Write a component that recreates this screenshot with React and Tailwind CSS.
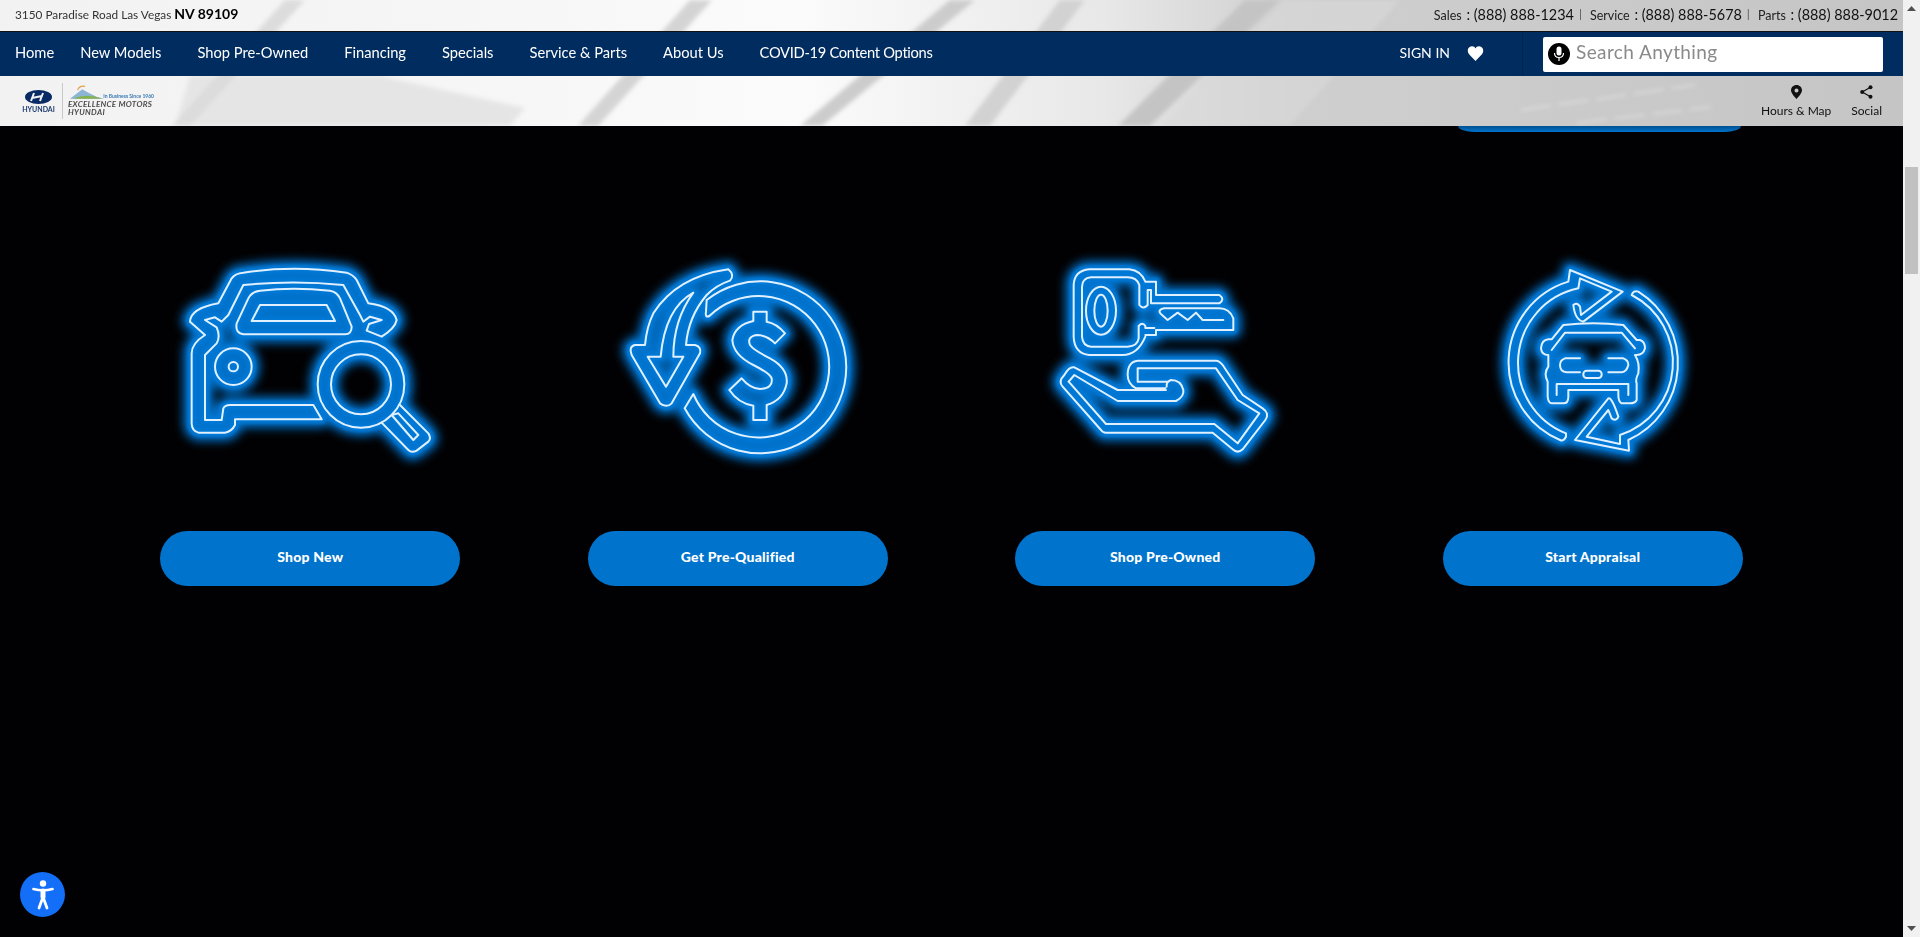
import React from "react";

const FONT = { fontFamily: "Lato, 'Liberation Sans', sans-serif" };

function Neon({ vx, shapes, cid }) {
  return (
    <svg width="300" height="230" viewBox={`${vx} 0 900 690`} className="overflow-visible" fill="none" strokeLinejoin="round" strokeLinecap="round">
      <defs>
        <filter id={`${cid}a`} x="-30%" y="-30%" width="160%" height="160%"><feGaussianBlur stdDeviation="15" /></filter>
        <filter id={`${cid}b`} x="-30%" y="-30%" width="160%" height="160%"><feGaussianBlur stdDeviation="5" /></filter>
      </defs>
      <g filter={`url(#${cid}a)`} stroke="#0672cc" strokeWidth="50">{shapes}</g>
      <g filter={`url(#${cid}b)`} stroke="#0678d6" strokeWidth="24">{shapes}</g>
      <g stroke="#e0f0ff" strokeWidth="6">{shapes}</g>
    </svg>
  );
}

const car = (
  <>
    <path d="M90 245 Q92 205 175 190 L215 115 Q225 100 250 98 Q400 75 560 98 Q580 105 590 120 L625 190 Q700 200 710 240 Q705 265 665 290 L620 272 L627 252 L665 240 L630 230 L610 245 L600 225 L550 135 Q400 120 250 135 L205 225 L185 245 L165 232 L135 240 L170 262 Q182 290 170 310 L135 345 V540 H185 L190 505 Q195 495 210 495 H460 L485 538 H225 V555 Q215 575 195 578 H115 Q95 572 95 550 V340 Q95 310 135 285 Z" />
    <path d="M230 250 L265 175 Q275 155 300 152 Q400 140 510 152 Q530 155 540 175 L575 260 Q575 282 555 283 H250 Q225 280 230 250 Z" />
    <path d="M300 195 H500 L525 243 H275 Z" />
    <circle cx="220" cy="380" r="55" />
    <circle cx="220" cy="380" r="14" />
    <circle cx="603" cy="433" r="130" />
    <circle cx="603" cy="433" r="90" />
    <path d="M720 495 L805 580 Q815 595 805 605 L770 632 Q755 640 745 630 L665 548" />
    <path d="M695 525 L715 520 L775 585 L760 600 Z" />
  </>
);

const dollar = (
  <>
    <path d="M290 180 A258 258 0 1 1 224 505 L250 462 A212 212 0 1 0 298 228 Q285 235 288 215 Z" />
    <path d="M355 88 Q200 110 130 220 Q110 260 105 315 H75 Q55 320 65 345 L150 490 Q170 505 185 490 L270 340 Q275 320 255 315 H228 Q235 230 290 165 Q320 135 360 122 Q375 105 355 88 Z" />
    <path d="M250 158 Q165 205 152 350 H113 L168 440 L220 350 H190 Q190 240 250 158 Z" />
    <path d="M430 215 H470 V245 Q500 250 525 280 L495 310 Q470 285 440 285 Q410 290 420 315 Q430 330 480 355 Q535 385 530 430 Q520 480 470 495 V540 H430 V497 Q385 490 358 450 L395 415 Q420 445 450 447 Q490 445 485 415 Q480 400 430 375 Q370 345 367 300 Q375 255 430 243 Z" />
  </>
);

const keyHand = (
  <>
    <path d="M318 290 Q295 345 250 345 H150 Q105 340 103 290 V135 Q105 92 150 88 H270 Q305 92 318 125 H350 V165 H540 Q558 178 540 190 H335 V150 H325 V195 Q312 210 300 195 V135 Q292 112 265 112 H155 Q128 115 128 140 V290 Q130 318 155 320 H265 Q295 318 298 295 V258 Q310 245 318 258 V264 H345" />
    <path d="M318 285 H350 V270 H582 V235 Q570 205 540 205 H375 Q350 210 368 225 L385 240 L415 218 L445 240 L470 218 L490 240 H552" />
    <ellipse cx="185" cy="212" rx="45" ry="72" />
    <ellipse cx="185" cy="212" rx="20" ry="48" />
    <path d="M380 450 H235 L105 382 Q90 378 75 405 Q55 425 70 440 L185 570 Q190 578 200 578 H520 L580 628 Q595 642 610 628 L678 540 Q692 520 670 505 L610 465 L550 375 Q540 362 530 362 H295 Q265 365 265 405 Q265 432 290 445 H378" />
    <path d="M88 425 L105 405 L235 483 H410 Q435 470 432 450 Q425 420 395 420 Q380 425 382 440" />
    <path d="M88 425 L200 552 H525 L595 610 L660 520 L595 480 L530 385 H295 V425 H385" />
  </>
);

const swap = (
  <>
    <path d="M258 590 Q250 605 240 600 A253 253 0 0 1 265 125 L270 90 L428 155 L310 245 Q285 240 280 195 Q290 185 300 200 L303 225 L395 155 L300 115 L295 145 A228 228 0 0 0 258 580 Z" />
    <path d="M455 165 Q460 150 475 155 A253 253 0 0 1 445 600 L447 632 L285 600 L385 475 Q395 470 415 530 Q410 545 395 535 L385 510 L320 590 L420 612 L420 585 A228 228 0 0 0 455 165 Z" />
    <path d="M250 255 Q340 245 430 255 L470 300 H480 Q495 305 495 325 Q490 345 470 345 H465 Q480 370 475 400 Q465 420 470 430 V480 Q465 490 450 490 H425 Q415 485 415 465 V450 H265 V470 Q265 490 250 490 H215 Q205 490 203 470 V425 Q190 400 205 380 V345 Q185 345 183 325 Q185 300 205 298 H215 Z" />
    <path d="M215 330 L255 278 H425 L465 325" />
    <path d="M300 355 H255 Q240 360 240 375 Q240 395 260 397 H300" />
    <path d="M385 355 H430 Q445 360 445 375 Q440 395 425 397 H385" />
    <rect x="310" y="392" width="55" height="22" rx="10" />
    <path d="M230 465 V432 H445 V465" />
  </>
);

function HeaderBackdrop() {
  return (
    <svg className="absolute inset-0 w-full h-full" viewBox="0 0 1903 126" preserveAspectRatio="none">
      <defs>
        <linearGradient id="hb" x1="0" x2="1" y1="0" y2="0">
          <stop offset="0" stopColor="#f2f2f2" />
          <stop offset="0.2" stopColor="#f5f5f5" />
          <stop offset="0.42" stopColor="#fbfbfb" />
          <stop offset="0.58" stopColor="#e8e8e8" />
          <stop offset="0.68" stopColor="#cfcfcf" />
          <stop offset="1" stopColor="#c5c5c5" />
        </linearGradient>
        <filter id="soft"><feGaussianBlur stdDeviation="2" /></filter>
      </defs>
      <rect width="1903" height="126" fill="url(#hb)" />
      <g filter="url(#soft)">
        <polygon points="190,76 380,76 525,108 510,126 175,126" fill="#e5e5e5" />
        <polygon points="285,0 305,0 190,126 172,126" fill="#dcdcdc" />
        <polygon points="690,0 712,0 598,126 578,126" fill="#d4d4d4" />
        <polygon points="950,0 975,0 822,126 800,126" fill="#cccccc" />
        <polygon points="1245,0 1280,0 1150,126 1118,126" fill="#c4c4c4" />
        <polygon points="1060,0 1085,0 990,126 965,126" fill="#d2d2d2" />
        <polygon points="1285,0 1400,0 1290,126 1160,126" fill="#d9d9d9" opacity=".6" />
        <path d="M1521 110 L1695 85" stroke="#e4e4e4" strokeWidth="1.5" strokeDasharray="30 8" />
        <path d="M1577 123 L1711 107" stroke="#e4e4e4" strokeWidth="1.5" strokeDasharray="30 8" />
      </g>
    </svg>
  );
}

const NAV = ["New Models", "Shop Pre-Owned", "Financing", "Specials", "Service & Parts", "About Us"];

function Logo() {
  return (
    <div className="flex items-center ml-[21px] h-[50px]">
      <div className="flex flex-col items-center w-[35px]">
        <svg width="27" height="14" viewBox="0 0 27 14">
          <ellipse cx="13.5" cy="7" rx="13.5" ry="7" fill="#0a2a66" />
          <path d="M9 3 L6 11 M18 3 L15 11 M7 8 L17 6" stroke="#f2f2f2" strokeWidth="2" fill="none" />
        </svg>
        <span className="text-[7px] leading-[7px] mt-[2px] font-bold text-[#1c3a70]">HYUNDAI</span>
      </div>
      <div className="w-px h-[36px] bg-[#c8c8c8] ml-[6px] mr-[5px]" />
      <div className="relative w-[86px] h-[32px]">
        <svg className="absolute left-0 top-0" width="38" height="15" viewBox="0 0 40 15">
          <path d="M2 14 L15 4 L22 8 L30 12 L38 14 Z" fill="#8cb4d4" />
          <path d="M5 14 Q20 8 36 14 Z" fill="#86b24c" />
          <path d="M10 5 Q12 0 18 1" stroke="#e2a24a" strokeWidth="1.2" fill="none" />
        </svg>
        <span className="absolute right-0 top-[9px] text-[5px] leading-[5px] font-bold text-[#3a78b4] whitespace-nowrap">In Business Since 1960</span>
        <span className="absolute left-0 top-[15px] text-[8px] leading-[8px] font-bold italic text-[#4a4a4a] whitespace-nowrap tracking-[0.3px]">EXCELLENCE MOTORS</span>
        <span className="absolute left-0 top-[23px] text-[8px] leading-[8px] font-bold italic text-[#4a4a4a] whitespace-nowrap tracking-[0.3px]">HYUNDAI</span>
      </div>
    </div>
  );
}

function Phone({ label, num }) {
  return (
    <span className="whitespace-nowrap">
      <span className="text-[12.5px] text-[#222]">{label}</span>
      <span className="text-[14.4px] text-[#111] ml-[1px]"> : {num}</span>
    </span>
  );
}

function Sep() {
  return <span className="text-[12px] text-[#555] ml-[5px] mr-[8px]">|</span>;
}

function Header() {
  return (
    <header className="relative h-[126px] shrink-0 overflow-hidden">
      <HeaderBackdrop />
      <div className="relative flex flex-col h-full">
        <div className="flex items-center justify-between h-[31px] pl-[15px] pr-[5px] pb-[4px]">
          <div className="text-[11.8px] text-[#333]">
            3150 Paradise Road Las Vegas <span className="text-[14px] font-bold text-black">NV 89109</span>
          </div>
          <div className="flex items-center">
            <Phone label="Sales" num="(888) 888-1234" />
            <Sep />
            <Phone label="Service" num="(888) 888-5678" />
            <Sep />
            <Phone label="Parts" num="(888) 888-9012" />
          </div>
        </div>
        <nav className="flex items-center h-[45px] bg-[#002c5f] border-t border-[#111] text-white">
          <ul className="flex items-center gap-[36px] pl-[15px] pb-[3px] text-[14.7px]">
            <li className="whitespace-nowrap mr-[-10px]">Home</li>
            {NAV.map((n) => (<li key={n} className="whitespace-nowrap">{n}</li>))}
            <li className="whitespace-nowrap tracking-[-0.3px]">COVID-19 Content Options</li>
          </ul>
          <div className="ml-auto flex items-center h-full">
            <span className="text-[14px] pb-[3px]">SIGN IN</span>
            <svg className="ml-[17px] mb-[1px]" width="17" height="15" viewBox="0 0 24 22" fill="white">
              <path d="M12 22 L2.5 12 C-1 8 0.5 1 6.5 0.5 C9 0.3 11 1.6 12 3.5 C13 1.6 15 0.3 17.5 0.5 C23.5 1 25 8 21.5 12 Z" />
            </svg>
            <div className="w-px h-full bg-[#00264f] ml-[38px] mr-[20px]" />
            <div className="flex items-center w-[340px] h-[35px] bg-white rounded-[2px] pl-[5px] mr-[20px]">
              <span className="flex items-center justify-center w-[22px] h-[22px] rounded-full bg-black">
                <svg width="12" height="16" viewBox="0 0 12 16" fill="none">
                  <rect x="3.5" y="0.5" width="5" height="9" rx="2.5" fill="white" />
                  <path d="M1.5 7 Q1.5 11.5 6 11.5 Q10.5 11.5 10.5 7 M6 11.5 V15" stroke="white" strokeWidth="1.2" />
                </svg>
              </span>
              <span className="ml-[6px] pb-[3px] text-[19px] text-[#8a8a8a] tracking-[0.4px]">Search Anything</span>
            </div>
          </div>
        </nav>
        <div className="flex items-center justify-between flex-1">
          <Logo />
          <div className="flex items-start gap-[20px] pr-[21px] text-[12px] text-[#111] pt-[1px]">
            <div className="flex flex-col items-center">
              <svg width="11" height="14" viewBox="0 0 11 14"><path fillRule="evenodd" d="M5.5 0 C2.4 0 0 2.4 0 5.3 C0 8.8 5.5 14 5.5 14 C5.5 14 11 8.8 11 5.3 C11 2.4 8.6 0 5.5 0 Z M5.5 3.4 A2 2 0 1 1 5.5 7.4 A2 2 0 1 1 5.5 3.4 Z" fill="#111" /></svg>
              <span className="mt-[5px] leading-[14px]">Hours &amp; Map</span>
            </div>
            <div className="flex flex-col items-center">
              <svg width="13" height="14" viewBox="0 0 13 14" fill="#111"><circle cx="10.5" cy="2.2" r="2" /><circle cx="2.2" cy="7" r="2" /><circle cx="10.5" cy="11.8" r="2" /><path d="M10.5 2.2 L2.2 7 L10.5 11.8" stroke="#111" strokeWidth="1.2" fill="none" /></svg>
              <span className="mt-[5px] leading-[14px]">Social</span>
            </div>
          </div>
        </div>
      </div>
    </header>
  );
}

const ITEMS = [
  { label: "Shop New", vx: 0, shapes: car, cid: "n1" },
  { label: "Get Pre-Qualified", vx: -66, shapes: dollar, cid: "n2" },
  { label: "Shop Pre-Owned", vx: -73, shapes: keyHand, cid: "n3" },
  { label: "Start Appraisal", vx: -111, shapes: swap, cid: "n4" },
];

function Scrollbar() {
  return (
    <div className="relative flex flex-col items-center w-[17px] shrink-0 h-full bg-[#f1f1f1]">
      <svg className="mt-[6px]" width="9" height="5" viewBox="0 0 9 5"><path d="M4.5 0 L9 5 H0 Z" fill="#505050" /></svg>
      <div className="w-[13px] h-[107px] bg-[#c1c1c1] mt-[156px]" />
      <svg className="mt-auto mb-[6px]" width="9" height="5" viewBox="0 0 9 5"><path d="M0 0 H9 L4.5 5 Z" fill="#505050" /></svg>
    </div>
  );
}

export default function App() {
  return (
    <div className="relative flex h-[937px] w-[1920px] overflow-hidden bg-black" style={FONT}>
      <div className="flex flex-col flex-1 min-w-0">
        <Header />
        <main className="flex-1 bg-[#010103]">
          <div className="w-[283px] h-[6px] ml-[1458px] bg-gradient-to-b from-[#00508f] to-[#0073cc] rounded-b-[17px_6px]" />
          <div className="grid grid-cols-4 w-[1710px] mx-auto mt-[108px]">
            {ITEMS.map((it) => (
              <div key={it.label} className="flex flex-col items-center">
                <Neon vx={it.vx} shapes={it.shapes} cid={it.cid} />
                <button className="w-[300px] h-[55px] mt-[61px] pb-[5px] rounded-[28px] bg-[#0073cc] text-white text-[14px] font-black tracking-[0.2px]">
                  {it.label}
                </button>
              </div>
            ))}
          </div>
        </main>
      </div>
      <Scrollbar />
      <div className="absolute left-[20px] top-[872px] flex items-center justify-center w-[45px] h-[45px] rounded-full bg-[#146ff8]">
        <svg width="22" height="30" viewBox="0 0 22 30" fill="none" stroke="white" strokeLinecap="round" strokeLinejoin="round">
          <circle cx="11" cy="3.5" r="3.2" fill="white" stroke="none" />
          <path d="M1.5 9 Q11 11.5 20.5 9" strokeWidth="2.6" />
          <path d="M11 11 V17" strokeWidth="5" />
          <path d="M11 17 L7 28 M11 17 L15 28" strokeWidth="2.8" />
        </svg>
      </div>
    </div>
  );
}
